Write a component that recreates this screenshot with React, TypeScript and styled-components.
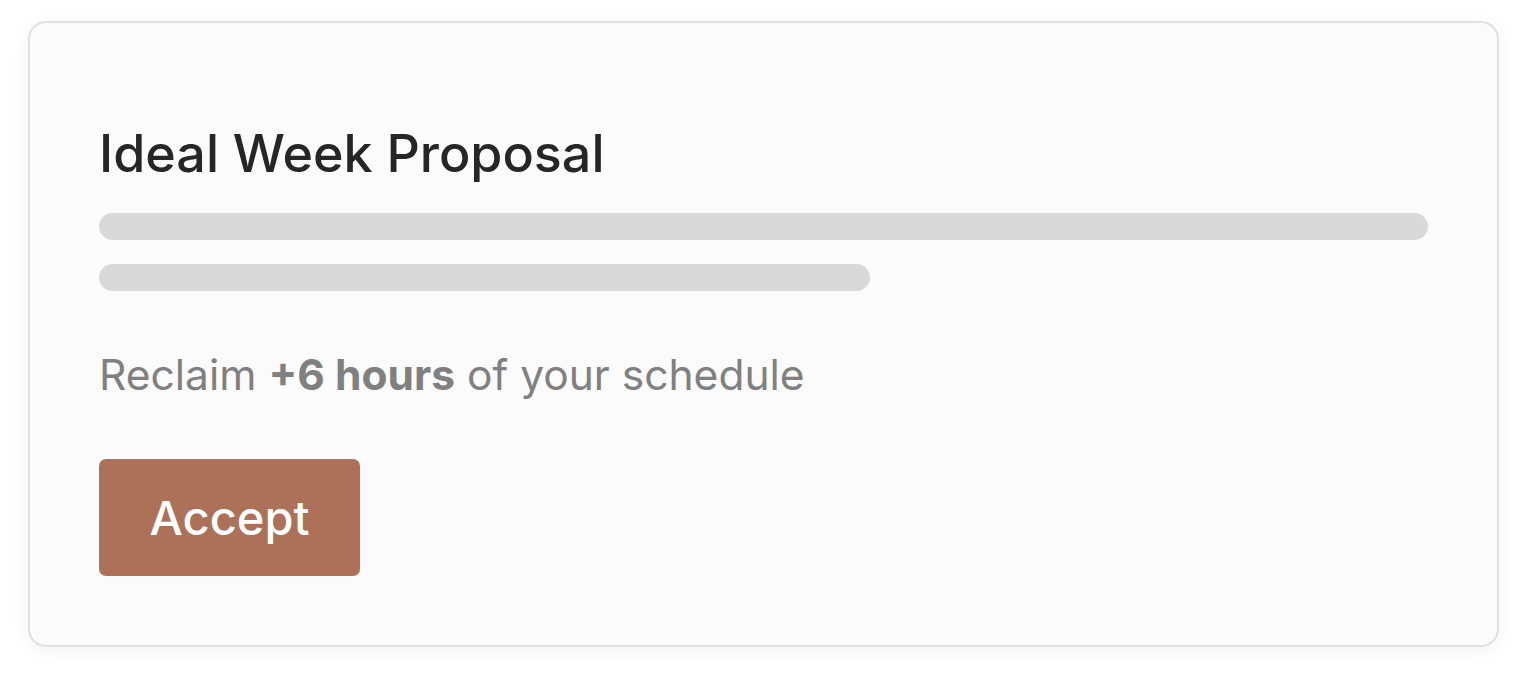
import React from "react";
import styled, { createGlobalStyle } from "styled-components";

const Global = createGlobalStyle`
  html, body { margin: 0; padding: 0; background: #ffffff; }
  body { font-family: Inter, "Noto Sans", sans-serif; }
`;

const Page = styled.div`
  padding: 21px 28px;
  box-sizing: border-box;
  width: 1527px;
  height: 681px;
`;

const Card = styled.div`
  box-sizing: border-box;
  width: 1471px;
  height: 626px;
  background: #fbfbfb;
  border: 2px solid #e1e1e1;
  border-radius: 18px;
  box-shadow: 0 4px 22px rgba(0, 0, 0, 0.05);
  padding: 0 69px;
  display: flex;
  flex-direction: column;
  align-items: flex-start;
`;

const Title = styled.h1`
  margin: 99px 0 0;
  font-family: Inter, sans-serif;
  font-weight: 500;
  font-size: 52px;
  line-height: 64px;
  color: #262626;
  letter-spacing: 0;
`;

const Bars = styled.div`
  display: flex;
  flex-direction: column;
  gap: 24px;
  margin-top: 27px;
`;

const Bar = styled.div<{ $w: string }>`
  height: 27px;
  width: ${(p) => p.$w};
  background: #d9d9d9;
  border-radius: 14px;
`;

const Sub = styled.p`
  margin: 58px 0 0;
  font-family: Inter, sans-serif;
  font-size: 42.5px;
  line-height: 52px;
  color: #808080;
  b { font-weight: 700; }
`;

const Button = styled.button`
  margin-top: 58px;
  width: 261px;
  height: 117px;
  border: none;
  border-radius: 7px;
  background: #ad7159;
  color: #ffffff;
  font-family: Inter, sans-serif;
  font-weight: 500;
  font-size: 47px;
  padding: 0;
  cursor: pointer;
`;

export default function App() {
  return (
    <>
      <Global />
      <Page>
        <Card>
          <Title>Ideal Week Proposal</Title>
          <Bars>
            <Bar $w="1329px" />
            <Bar $w="771px" />
          </Bars>
          <Sub>
            Reclaim <b>+6 hours</b> of your schedule
          </Sub>
          <Button>Accept</Button>
        </Card>
      </Page>
    </>
  );
}
